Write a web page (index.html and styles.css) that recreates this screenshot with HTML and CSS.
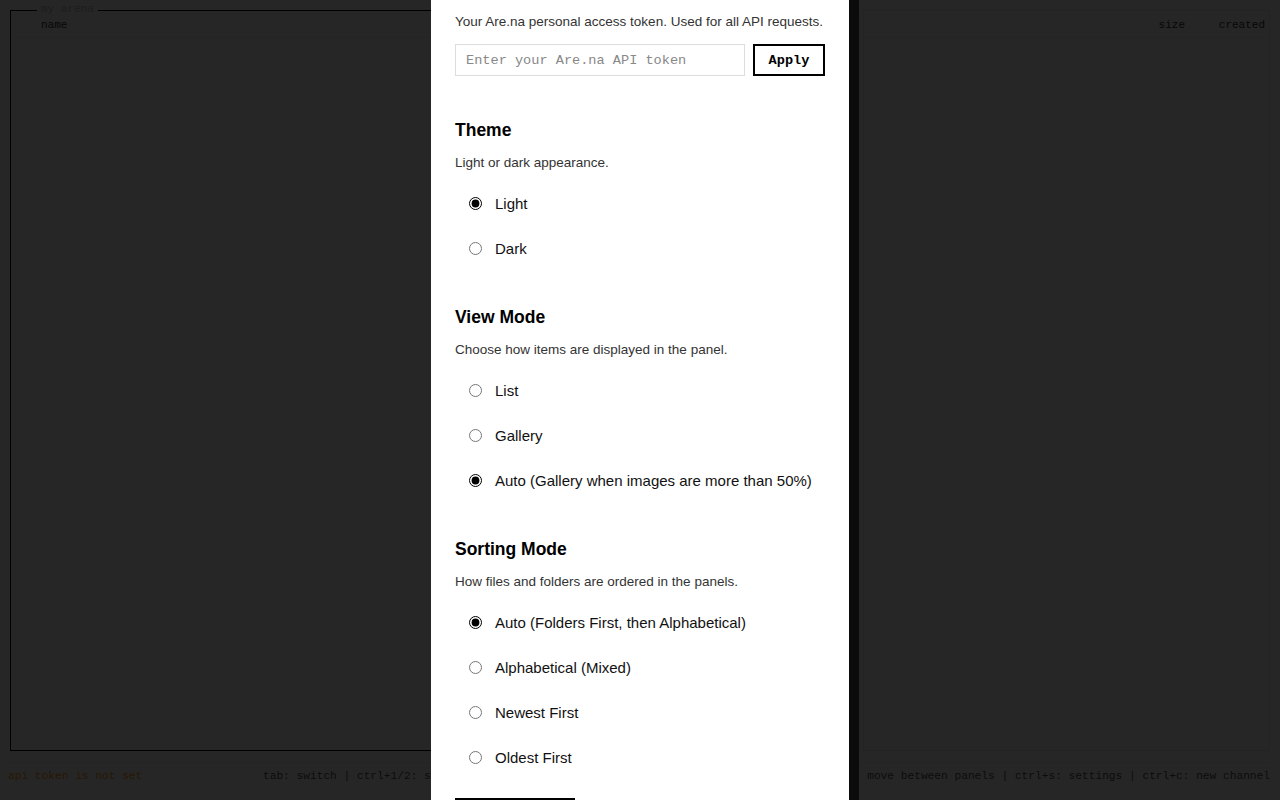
FILE: index.html
```html
<!DOCTYPE html>
<html lang="en">
<head>
    <meta charset="UTF-8">
    <meta name="viewport" content="width=device-width, initial-scale=1.0">
    <title>arena commander</title>
    <link rel="stylesheet" href="styles.css">
</head>
<body>
    <div class="app">
        <div class="panels">
            <!-- Left panel (active) -->
            <div class="panel active">
                <span class="panel-title">my arena</span>
                <div class="panel-header">
                    <span></span>
                    <span>name</span>
                    <span class="num">size</span>
                    <span class="num">created</span>
                </div>
            </div>

            <!-- Right panel -->
            <div class="panel">
                <div class="panel-header">
                    <span></span>
                    <span></span>
                    <span class="num">size</span>
                    <span class="num">created</span>
                </div>
            </div>
        </div>

        <div class="footer">
            <span class="status-warn">api token is not set</span>
            <span class="help">tab: switch | ctrl+1/2: switch panel | enter: open | backspace: up | space: tag | arrows: move between panels | ctrl+s: settings | ctrl+c: new channel</span>
        </div>
    </div>

    <!-- Settings modal -->
    <div class="overlay"></div>
    <div class="modal">
        <div class="section token-section">
            <p class="desc">Your Are.na personal access token. Used for all API requests.</p>
            <div class="token-row">
                <input type="text" placeholder="Enter your Are.na API token">
                <button>Apply</button>
            </div>
        </div>

        <div class="section">
            <h3>Theme</h3>
            <p class="desc">Light or dark appearance.</p>
            <label class="option"><input type="radio" name="theme" checked> Light</label>
            <label class="option"><input type="radio" name="theme"> Dark</label>
        </div>

        <div class="section">
            <h3>View Mode</h3>
            <p class="desc">Choose how items are displayed in the panel.</p>
            <label class="option"><input type="radio" name="view"> List</label>
            <label class="option"><input type="radio" name="view"> Gallery</label>
            <label class="option"><input type="radio" name="view" checked> Auto (Gallery when images are more than 50%)</label>
        </div>

        <div class="section last">
            <h3>Sorting Mode</h3>
            <p class="desc">How files and folders are ordered in the panels.</p>
            <label class="option"><input type="radio" name="sort" checked> Auto (Folders First, then Alphabetical)</label>
            <label class="option"><input type="radio" name="sort"> Alphabetical (Mixed)</label>
            <label class="option"><input type="radio" name="sort"> Newest First</label>
            <label class="option"><input type="radio" name="sort"> Oldest First</label>
        </div>

        <button class="close-btn">Close</button>
    </div>
</body>
</html>
```

FILE: styles.css
```css
body { margin: 0; background: #fff; color: #333; font-family: "Liberation Mono", monospace; font-size: 11px; }
.app { height: 100vh; display: flex; flex-direction: column; padding: 10px 10px 0; box-sizing: border-box; }
.panels { flex: 1; display: grid; grid-template-columns: 843px 1fr; gap: 10px; }
.panel { position: relative; border: 1px solid #e6e6e6; }
.panel.active { border-color: #000; }
.panel-title { position: absolute; top: -8px; left: 26px; padding: 0 4px; background: #fff; color: #bbb; }
.panel-header { display: grid; grid-template-columns: 20px 1fr 60px 80px; padding: 8px 4px 5px 10px; line-height: 13px; border-bottom: 1px solid #eee; }
.panel-header .num { text-align: right; }
.footer { display: flex; justify-content: space-between; margin-top: 11px; border-top: 1px solid #eee; padding: 6px 0 0; height: 38px; box-sizing: border-box; font-size: 0.7rem; line-height: 14px; margin-left: -2px; }
.status-warn { color: #ff9a10; }
.help { color: #555; white-space: nowrap; }

.overlay { position: fixed; inset: 0; background: rgba(0, 0, 0, 0.85); }
.modal { position: fixed; top: 0; left: 431px; width: 428px; height: 100vh; box-sizing: border-box; padding: 13px 24px 0; background: #fff; border-right: 10px solid #0b0b0b; overflow: hidden; font-family: "Liberation Sans", Arial, sans-serif; color: #111; }
.modal h3 { font-size: 17.5px; line-height: 21px; margin: 0 0 13px; color: #000; }
.desc { font-size: 13.5px; line-height: 18px; margin: 0 0 9px; color: #333; white-space: nowrap; }
.section { margin-bottom: 36px; }
.section.last { margin-bottom: 0; }
.token-section { margin-bottom: 44px; }
.token-section .desc { margin-bottom: 10px; }
.token-row { display: flex; gap: 8px; margin-top: 13px; }
.token-row input { flex: 1; min-width: 0; height: 32px; box-sizing: border-box; border: 1px solid #ddd; padding: 0 10px; font-family: "Liberation Mono", monospace; font-size: 13.6px; color: #333; }
.token-row input::placeholder { color: #888; }
.token-row button { width: 72px; height: 32px; border: 2px solid #000; background: #fff; font-family: "Liberation Mono", monospace; font-size: 13.6px; font-weight: bold; color: #000; cursor: pointer; }
.option { display: flex; align-items: center; gap: 13px; padding: 12px 0 12px 14px; font-size: 15px; line-height: 21px; cursor: pointer; }
.option input { margin: 0; width: 13px; height: 13px; accent-color: #000; }
.close-btn { display: block; margin-top: 18px; width: 120px; height: 36px; border: 2px solid #000; background: #fff; font-family: "Liberation Mono", monospace; font-weight: bold; }
```
